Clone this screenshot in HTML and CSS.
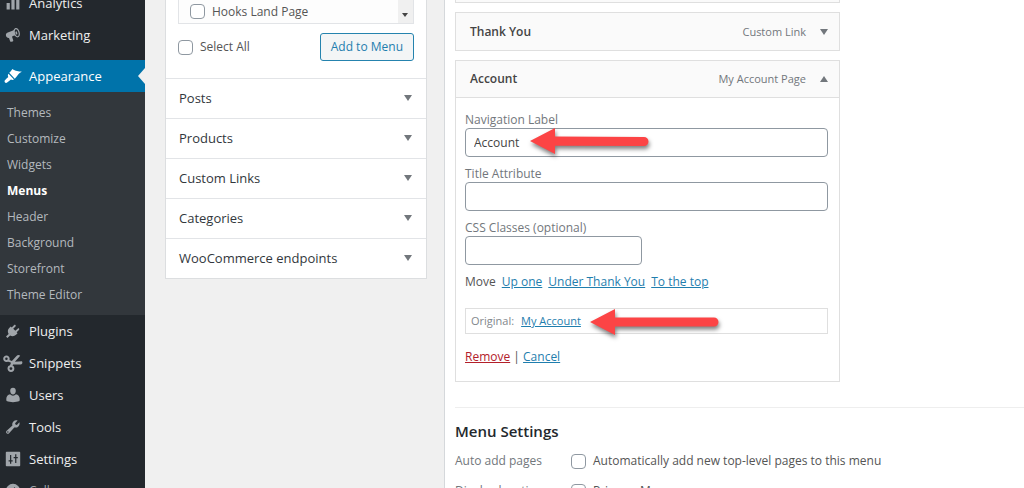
FILE: index.html
```html
<!DOCTYPE html>
<html lang="en">
<head>
    <meta charset="UTF-8">
    <meta name="viewport" content="width=device-width, initial-scale=1.0">
    <title>Menus</title>
    <link rel="stylesheet" href="styles.css">
</head>
<body>
    <div class="admin">
        <nav class="sidebar">
            <a class="item" href="#">
                <svg class="icon" viewBox="0 0 20 20"><path d="M2 10h4v8H2zM8 6h4v12H8zM14 2h4v16h-4z"/></svg>
                Analytics
            </a>
            <a class="item" href="#">
                <svg class="icon" viewBox="0 0 20 20"><path fill-rule="evenodd" d="M18.200 5.900c1 3.200.3 6.300-1.800 7-1.400.400-3-.5-4.400-2.200l-2.200.7c-.6.2-1 .8-.8 1.500l1.300 3.600c.2.700-.1 1.300-.7 1.500l-1.600.500c-.7.200-1.400-.1-1.600-.8l-1.400-4.100c-1.700.3-3.200-.5-3.700-2.200C.6 9.300 1.700 7.700 3.500 7l5.800-2.300c1-.4 1.600-1.200 2.100-2 .4-.8 1-1.300 1.700-1.500 2-.6 4.200 1.400 5.100 4.700zM16 11.500c1.200-.4 1.500-2.700.8-5-.7-2.400-2.200-4.100-3.400-3.700-1.200.4-1.500 2.600-.8 5 .7 2.300 2.200 4.100 3.400 3.700z"/><ellipse cx="14.200" cy="7.400" rx="1.100" ry="2" transform="rotate(-17 14.200 7.400)"/></svg>
                Marketing
            </a>
            <a class="item current" href="#">
                <svg class="icon brush" viewBox="0 0 20 18"><path d="M7 4.200L9.400 1c1.500 1.400 3.300 1.900 5.200 2.300 1.600.4 3.600.4 5.400 1-2.400 1.200-4.200 2.700-5.400 4.700L12 12 5.800 5.300zM4.900 6.500l6.200 6.500c-1 .6-2.300.6-3.400 0-1.500 1.100-2.600 2.300-4.300 3.400-1.900 1.200-3.800-.9-2.500-2.700 1.100-1.500 2.600-2.300 3.800-3.700-.7-1.100-.6-2.500.2-3.500z"/></svg>
                Appearance
            </a>
            <ul class="submenu">
                <li><a href="#">Themes</a></li>
                <li><a href="#">Customize</a></li>
                <li><a href="#">Widgets</a></li>
                <li><a class="active" href="#">Menus</a></li>
                <li><a href="#">Header</a></li>
                <li><a href="#">Background</a></li>
                <li><a href="#">Storefront</a></li>
                <li><a href="#">Theme Editor</a></li>
            </ul>
            <a class="item" href="#">
                <svg class="icon" viewBox="0 0 20 20"><path d="M13.100 4.400L10.300 7.200 12.900 9.800l2.900-2.700c.6-.6 1.400-.6 1.800-.1s.4 1.200-.2 1.800l-2.800 2.900 1.100 1.100-1.900 1.900c-2.100 2-5.100 2.300-7.400.8L3 18.700 1.300 17l3.200-3.400C3 11.400 3.300 8.500 5.300 6.400l1.900-1.900 1.200 1.100 2.800-2.900c.6-.6 1.300-.7 1.800-.2s.6 1.300.1 1.900z"/></svg>
                Plugins
            </a>
            <a class="item" href="#">
                <svg class="icon scissors" viewBox="0 0 22 20"><g fill="none" stroke="currentColor" stroke-width="2.200"><circle cx="3.700" cy="5.300" r="2.500"/><circle cx="8.700" cy="16.200" r="2.700"/></g><path d="M5.500 6l4.300 1.700 5.100-5.500c1.200-1.300 3-1.300 4.100-.3l-5.900 6.600 7.900-.5c1.100 1.700.1 3.500-1.700 3.600l-8.200.2-1.200 2.400-2.600-1 1.500-3.400-4.600-1.900z"/></svg>
                Snippets
            </a>
            <a class="item" href="#">
                <svg class="icon" viewBox="0 0 20 20"><path d="M10 9.300c-2 0-3.500-2-3.500-4.400S7.700 1 10 1s3.500 1.500 3.500 3.900S12 9.300 10 9.300zM6.300 9.200c1 1.100 2.300 1.800 3.700 1.800s2.700-.7 3.700-1.800c2.700.6 4.700 2.800 4.700 5.800 0 1-.1 2-.4 2.600-2.300 1-5 1.400-8 1.400s-5.700-.4-8-1.400c-.3-.6-.4-1.600-.4-2.600 0-3 2-5.200 4.700-5.800z"/></svg>
                Users
            </a>
            <a class="item" href="#">
                <svg class="icon" viewBox="0 0 20 20"><path fill-rule="evenodd" d="M16.700 9.300c-1.400 1.400-3.300 1.800-5.100 1.200l-6.500 7.200c-.8.900-2.200 1-3.100.1-.9-.9-.8-2.300.1-3.100l7.200-6.500C8.700 6.400 9.100 4.500 10.500 3.100c1.400-1.400 3.500-1.800 5.300-1.100l-3.200 3.200.5 1.700 1.700.5L18 4.200c.6 1.700.1 3.700-1.300 5.100zM3.600 17.200a.9.900 0 100-1.800.9.900 0 000 1.800z"/></svg>
                Tools
            </a>
            <a class="item" href="#">
                <svg class="icon" viewBox="0 0 20 20"><path fill-rule="evenodd" d="M2 1h16c.6 0 1 .4 1 1v16c0 .6-.4 1-1 1H2c-.6 0-1-.4-1-1V2c0-.6.4-1 1-1zM6.300 5v6.500H4.500V13h1.800v3h1.500v-3h1.800v-1.500H7.800V5zM12.700 4v3.500h-1.900V9h1.900v6h1.500V9H16V7.500h-1.800V4z"/></svg>
                Settings
            </a>
            <button class="item collapse" type="button">
                <svg class="icon" viewBox="0 0 20 20"><path fill-rule="evenodd" d="M10 1a9 9 0 110 18 9 9 0 010-18zM12.500 5L6 10l6.500 5z"/></svg>
                Collapse menu
            </button>
        </nav>

        <aside class="sources">
            <div class="panel">
                <div class="pages">
                    <div class="page-list">
                        <label class="check"><input type="checkbox"> Hooks Land Page</label>
                        <div class="scroll"><span class="scroll-down"></span></div>
                    </div>
                    <div class="page-actions">
                        <label class="check"><input type="checkbox"> Select All</label>
                        <button class="add-btn" type="button">Add to Menu</button>
                    </div>
                </div>
                <button class="section" type="button">Posts <span class="arrow"></span></button>
                <button class="section" type="button">Products <span class="arrow"></span></button>
                <button class="section" type="button">Custom Links <span class="arrow"></span></button>
                <button class="section" type="button">Categories <span class="arrow"></span></button>
                <button class="section" type="button">WooCommerce endpoints <span class="arrow"></span></button>
            </div>
        </aside>

        <main class="content">
            <div class="menu-items">
                <div class="menu-bar"></div>
                <div class="menu-bar">
                    <strong>Thank You</strong>
                    <span class="type">Custom Link</span>
                    <span class="arrow"></span>
                </div>
                <div class="menu-bar open">
                    <strong>Account</strong>
                    <span class="type">My Account Page</span>
                    <span class="arrow up"></span>
                </div>
                <form class="menu-body">
                    <div class="field">
                        <label for="nav-label">Navigation Label</label>
                        <input type="text" id="nav-label" value="Account">
                        <svg class="pointer pointer-label" width="126" height="36" viewBox="0 0 126 36"><path d="M0 13L25 0v8.500l89 .5a4.500 4.500 0 010 9l-89-.3V26z"/></svg>
                    </div>
                    <div class="field">
                        <label for="title-attr">Title Attribute</label>
                        <input type="text" id="title-attr">
                    </div>
                    <div class="field half">
                        <label for="css-classes">CSS Classes (optional)</label>
                        <input type="text" id="css-classes">
                    </div>
                    <div class="move">
                        <span>Move</span>
                        <a href="#">Up one</a>
                        <a href="#">Under Thank You</a>
                        <a href="#">To the top</a>
                    </div>
                    <div class="original">
                        <span>Original:</span>
                        <a href="#">My Account</a>
                        <svg class="pointer pointer-original" width="136" height="36" viewBox="0 0 136 36"><path d="M0 13L25 0v8.500h99a4.500 4.500 0 010 9H25V26z"/></svg>
                    </div>
                    <div class="links"><a class="remove" href="#">Remove</a> | <a href="#">Cancel</a></div>
                </form>
            </div>

            <section class="settings">
                <h3>Menu Settings</h3>
                <div class="setting">
                    <span class="setting-name">Auto add pages</span>
                    <label class="check"><input type="checkbox"> Automatically add new top-level pages to this menu</label>
                </div>
                <div class="setting">
                    <span class="setting-name">Display location</span>
                    <label class="check"><input type="checkbox" checked> Primary Menu</label>
                </div>
            </section>
        </main>
    </div>
</body>
</html>
```
FILE: styles.css
```css
* { box-sizing: border-box; }
body { margin: 0; height: 100vh; overflow: hidden; background: #f0f0f0; color: #555; font: 12px/16px "Open Sans", "Noto Sans", sans-serif; }
button, input { font: inherit; color: inherit; }
a { color: #1f7eae; }
.admin { display: flex; height: 100vh; overflow: hidden; }

/* sidebar */
.sidebar { flex: 0 0 145px; overflow: hidden; background: #23282d; }
.sidebar .item:first-child { margin-top: -13px; }
.item { display: flex; align-items: center; gap: 8px; width: 100%; height: 32px; padding: 0 5px; border: none; background: none; color: #eee; font-size: 13px; text-decoration: none; }
.icon { width: 16px; height: 16px; flex: none; fill: #a0a5aa; color: #a0a5aa; }
.scissors { width: 20px; height: 18px; margin: 0 -2px; }
.brush { width: 18px; margin: 0 -1px; }
.current { position: relative; margin-top: 9px; background: #0073aa; color: #fff; }
.current .icon { fill: #fff; }
.current::after { content: ""; position: absolute; right: 0; top: 8px; border: 8px solid transparent; border-left: none; border-right: 7px solid #f0f0f0; }
.submenu { margin: 0; padding: 8px 7px 7px; list-style: none; background: #32373c; }
.submenu a { display: block; line-height: 26px; color: #b4b9be; text-decoration: none; }
.submenu .active { color: #fff; font-weight: 700; }
.collapse { color: #a0a5aa; font-size: 12px; }

/* left column */
.sources { flex: 0 0 299px; padding: 0 17px 0 20px; }
.panel { border: 1px solid #dcdee0; border-top: none; background: #fff; }
.pages { padding: 0 12px 17px; }
.page-list { display: flex; justify-content: space-between; height: 24px; padding-left: 11px; border: 1px solid #e2e4e7; border-top: none; background: #fdfdfd; }
.scroll { display: flex; align-items: flex-end; width: 15px; padding: 0 4px 6px; background: #f0f0f0; }
.scroll-down { border: 3px solid transparent; border-top: 4px solid #444; border-bottom: none; }
.page-actions { display: flex; align-items: center; justify-content: space-between; margin-top: 9px; }
.check { display: flex; align-items: center; gap: 7px; }
.check input { appearance: none; width: 15px; height: 15px; margin: 0; border: 1px solid #8f98a1; border-radius: 4px; background: #fff; }
.check input:checked::before { content: ""; display: block; width: 6px; height: 11px; margin: 0 auto; border: solid #1e8cbe; border-width: 0 2px 2px 0; transform: rotate(40deg); }
.add-btn { height: 28px; padding: 0 10px; border: 1px solid #2583ae; border-radius: 3px; background: #f3f5f6; color: #1f7eae; }
.section { display: flex; align-items: center; justify-content: space-between; width: 100%; height: 40px; padding: 0 14px 1px 13px; border: none; border-top: 1px solid #e2e4e7; background: none; color: #32373c; font-size: 13px; font-weight: 500; }
.arrow { border: 4px solid transparent; border-top: 6px solid #72777c; border-bottom: none; }
.arrow.up { border-top: none; border-bottom: 6px solid #72777c; }

/* menu structure */
.content { flex: 1; min-width: 0; padding-left: 10px; border-left: 1px solid #d5d8db; background: #fff; }
.menu-items { max-width: 385px; margin-top: -36px; }
.menu-bar { display: flex; align-items: center; height: 39px; margin-bottom: 9px; padding: 0 11px 0 14px; border: 1px solid #dfdfdf; background: #fafafa; }
.menu-bar strong { flex: 1; color: #444; font-weight: 600; }
.menu-bar.open { height: 38px; margin-bottom: 0; }
.type { margin-right: 14px; color: #72777c; font-size: 11px; }
.menu-body { padding: 14px 11px 16px 9px; border: 1px solid #dfdfdf; border-top: none; }
.field { position: relative; display: flex; flex-direction: column; margin-bottom: 9px; color: #72777c; }
.field input { height: 29px; padding: 0 8px; border: 1px solid #8f98a1; border-radius: 4px; background: #fff; color: #444; font-size: 12px; }
.half { width: 177px; }
.move { display: flex; gap: 6px; }
.original { position: relative; display: flex; gap: 7px; margin: 18px 0 15px; padding: 4px 5px; border: 1px solid #dfdfdf; color: #82878c; font-size: 11px; }
.remove { color: #b3202a; }
.pointer { position: absolute; fill: #fc4445; filter: drop-shadow(1px 3px 2px rgba(0, 0, 0, 0.5)); }
.pointer-label { left: 65px; top: 16px; }
.pointer-original { left: 124px; top: 0; }

/* settings */
.settings { margin-top: 25px; padding-top: 12px; border-top: 1px solid #eee; }
.settings h3 { margin: 0 0 11px; color: #23282d; font-size: 15px; line-height: 22px; font-weight: 600; }
.setting { display: flex; margin-bottom: 14px; }
.setting-name { width: 116px; color: #72777c; }
```
